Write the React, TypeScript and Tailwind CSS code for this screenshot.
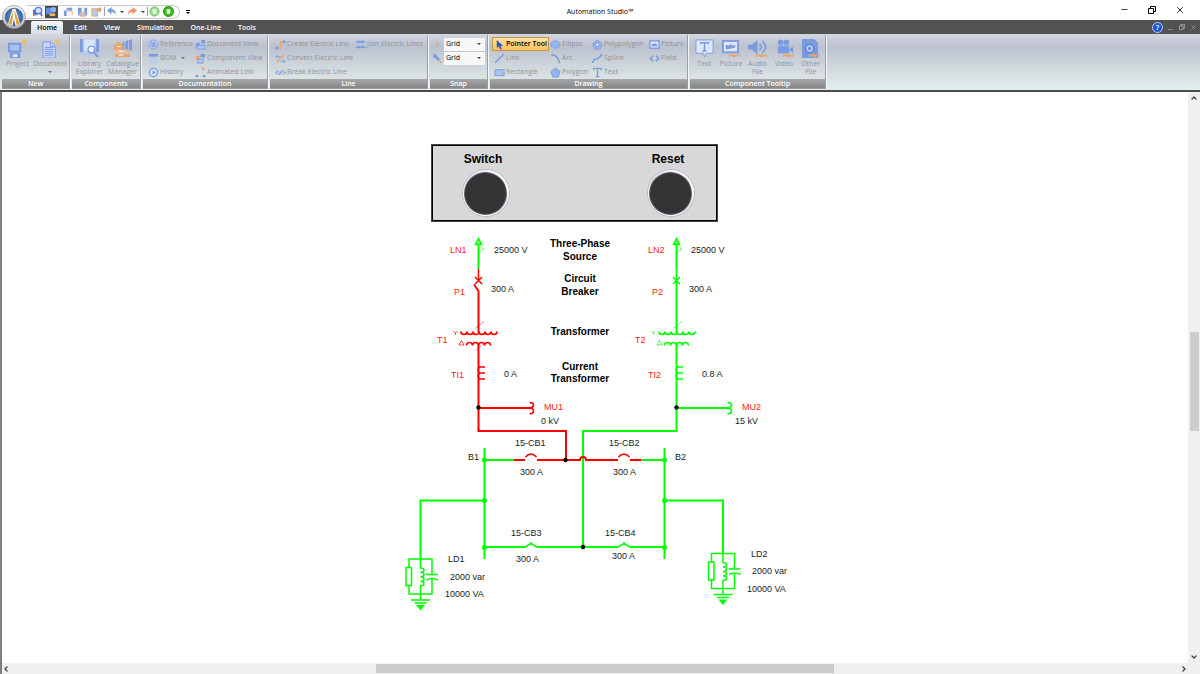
import type { ReactNode } from 'react';
import { ChevronDown, ChevronLeft, ChevronRight, ChevronUp, Minus, X } from 'lucide-react';

const BLUE = '#7b9be0';
const PALE = '#b4c8f2';
const ORANGE = '#eba26c';
const RED = '#ff0000';
const GREEN = '#00ff00';

const small: Record<string, ReactNode> = {
  reference: <><circle cx="6" cy="6" r="5" fill="#c3d2f3" stroke={BLUE} /><path d="M3 3l6 6M6 3l3 3M3 6l3 3" stroke={BLUE} strokeWidth="1.5" /></>,
  bom: <><path d="M1 1h10v3H1z" fill={BLUE} /><path d="M1 6h10M1 8.5h10M1 11h10M4 4v7M8 4v7" stroke={PALE} /></>,
  history: <><circle cx="6" cy="6" r="4.5" fill="#dbe5fa" stroke={BLUE} strokeWidth="1.5" /><path d="M5 3.5L8.5 6 5 8.5z" fill={BLUE} /></>,
  docView: <><path d="M1 4h4v6H1zM7 1h4v4H7z" fill={BLUE} /><path d="M2 7h9v4H2z" fill={PALE} stroke={BLUE} /></>,
  compView: <><path d="M6 1h5v4H6z" fill={BLUE} /><path d="M1 3h4v4H1z" fill={ORANGE} /><path d="M3 7h6v4H3z" fill={PALE} stroke={BLUE} /></>,
  animated: <><path d="M2 10h8M9 2v6" stroke={PALE} strokeDasharray="1 1" /><circle cx="2" cy="10" r="1.5" fill={BLUE} /><circle cx="9" cy="2" r="1.5" fill={ORANGE} /><circle cx="10" cy="10" r="1.5" fill={BLUE} /></>,
  createLine: <><path d="M2 10h4V3h4" fill="none" stroke={ORANGE} strokeWidth="1.5" /><circle cx="2" cy="10" r="1.7" fill={BLUE} /><circle cx="10" cy="3" r="1.7" fill={BLUE} /></>,
  convertLine: <><path d="M2 10L10 2" stroke={ORANGE} strokeWidth="1.5" /><path d="M1 4h5M3 2l-2 2 2 2M6 9h5M9 7l2 2-2 2" fill="none" stroke={BLUE} /></>,
  breakLine: <><path d="M0 6h1M11 6h1M5 9l2-6" stroke={BLUE} /><circle cx="2.7" cy="6" r="1.7" fill="none" stroke={BLUE} /><circle cx="9.3" cy="6" r="1.7" fill="none" stroke={BLUE} /></>,
  joinLines: <><path d="M1 3h10M1 9h10" stroke={BLUE} strokeWidth="1.5" /><path d="M4 1v4M8 1v4M4 7v4M8 7v4" stroke={BLUE} /></>,
  snapGrid: <><path d="M6 3v6M3 6h6" stroke={ORANGE} /><path d="M2 2v8M10 2v8" stroke={PALE} strokeDasharray="1 2" /></>,
  snapPoint: <><path d="M1 1l5 1-1 1 4 4-2 2-4-4-1 1z" fill={BLUE} /><circle cx="9.5" cy="10" r="1.2" fill={ORANGE} /></>,
  pointer: <path d="M3 1v9l2-2 2 3.5 1.5-1L7 7.5h3z" fill="#2456c8" />,
  line: <path d="M1 11L11 1" stroke={BLUE} strokeWidth="1.5" />,
  rectangle: <rect x="1" y="3" width="10" height="6.5" fill="#a9c2f4" stroke={BLUE} />,
  ellipse: <ellipse cx="6" cy="6" rx="5" ry="4" fill="#98b4ee" stroke={BLUE} />,
  arc: <path d="M1 2c5-.5 8 2.5 9.5 9" fill="none" stroke={BLUE} strokeWidth="1.7" />,
  polygon: <path d="M6 1l5 4-2 6H3L1 5z" fill="#98b4ee" stroke={BLUE} />,
  polypolygon: <><path d="M6 1l5 4-2 6H3L1 5z" fill="#98b4ee" stroke={BLUE} /><path d="M6 4l2 2-1 2.5H5L4 6z" fill="#e1eafb" stroke={BLUE} /></>,
  spline: <path d="M1 11C1 6 4 7 6 6s3-1 5-5" fill="none" stroke={BLUE} strokeWidth="1.7" />,
  text: <path d="M2 3.5V1.5h8v2M6 1.5v9M4 10.5h4" fill="none" stroke={BLUE} strokeWidth="1.5" />,
  picture: <><rect x="1" y="2" width="10" height="8" fill="#dfe8fb" stroke={BLUE} strokeWidth="1.5" /><path d="M3 8V5l2 1 1-2 2 2 1-1v3z" fill={BLUE} /></>,
  field: <path d="M4.5 3L1.5 6l3 3M7.5 3l3 3-3 3" fill="none" stroke={BLUE} strokeWidth="1.7" />,
};

const tooltipMark = <path d="M9 17.5h2l1-1 1 2 1-2 1 2 1-1h2M9 16v3M19 16v3" fill="none" stroke={ORANGE} strokeWidth="1.4" />;

const large: Record<string, ReactNode> = {
  project: <><path d="M1 5h12v8H1z" fill="#a8c0f0" stroke={BLUE} strokeWidth="2" /><path d="M2 14h11v6H2z" fill={BLUE} /><path d="M5 16h5v3H5z" fill="#dfe7f8" /><circle cx="17" cy="3" r="2.5" fill="#ecc868" /><path d="M14 3h6M17 0v6" stroke="#e2bd62" /></>,
  document: <><path d="M2 3h8l5 5v12H2z" fill="#c6d6f7" stroke={BLUE} /><path d="M4 9h9M4 11h9M4 13h9M4 15h9M4 17h9M10 3v5h5" fill="none" stroke={BLUE} /><circle cx="17" cy="3" r="2.5" fill="#ecc868" /><path d="M14 3h6M17 0v6" stroke="#e2bd62" /></>,
  library: <><path d="M0 0h3v14H0zM17 0h3v14h-3z" fill={BLUE} /><path d="M4 0h12v13H4z" fill="#dbe5fa" stroke={PALE} /><path d="M0 15h20v2H0z" fill={PALE} /><circle cx="12" cy="11" r="3.5" fill="#eef3fd" stroke={BLUE} strokeWidth="1.5" /><path d="M14.5 13.5L19 19" stroke={BLUE} strokeWidth="2" /></>,
  catalogue: <><path d="M10 4l2-2v9h-2zM13 3l3-2v10h-3zM17 1l3-1v12h-3z" fill={BLUE} /><path d="M1 7l5-4 5 4v4H1z" fill={ORANGE} /><path d="M1 12h17v3H1z" fill="#f0b98d" /><path d="M2 16h16v3H2z" fill={ORANGE} /><path d="M6 13h5M6 17h5M4 8h4" stroke="#fff" /></>,
  text: <><path d="M1 1h18v14h-7l-2 4-1-4H1z" fill="#dfe8fb" stroke={BLUE} /><path d="M6 5.5V4h8v1.5M10 4v8M8 12.5h4" fill="none" stroke={BLUE} strokeWidth="1.7" /></>,
  picture: <><rect x="2" y="2" width="16" height="12" fill="#dfe8fb" stroke={BLUE} strokeWidth="2" /><path d="M5 11V6l3 1 2-2 2 2 3-1v3l-4 1z" fill={BLUE} />{tooltipMark}</>,
  audio: <><path d="M0 6h4l6-5v15l-6-5H0z" fill={BLUE} /><path d="M12 5q4 3.5 0 7M15 2q7 6.5 0 13" fill="none" stroke={BLUE} strokeWidth="1.8" />{tooltipMark}</>,
  video: <><circle cx="6" cy="3.5" r="3" fill={BLUE} /><circle cx="12" cy="3.5" r="3" fill={BLUE} /><path d="M3 7h12v8H3zM15 11l4-3v7z" fill={BLUE} />{tooltipMark}</>,
  file: <><path d="M1 0h13l4 4v16H1z" fill={BLUE} /><circle cx="9" cy="10" r="4.5" fill={PALE} stroke="#5b82d6" strokeWidth="1.5" /><circle cx="9" cy="10" r="1.5" fill="#5b82d6" />{tooltipMark}</>,
};

function SmallIcon({ name }: { name: string }) {
  return <svg viewBox="0 0 12 12" className="w-[11px] h-[11px] shrink-0" aria-hidden="true">{small[name]}</svg>;
}

function Tool({ icon, label, menu, active }: { icon: string; label: string; menu?: boolean; active?: boolean }) {
  return (
    <button type="button" className={`flex items-center justify-self-start h-[12px] px-px gap-px whitespace-nowrap text-[7px] leading-[8px] ${active ? 'bg-linear-to-b from-[#ffe3a6] to-[#ffc258] outline outline-[#c69447] text-black font-semibold' : 'text-[#8f939b]'}`}>
      <SmallIcon name={icon} />
      <span>{label}</span>
      {menu && <span className="ml-1 border-x-2 border-x-transparent border-t-2 border-t-gray-500" />}
    </button>
  );
}

function BigTool({ icon, label, menu }: { icon: string; label: string; menu?: boolean }) {
  return (
    <button type="button" className="flex flex-col items-center pt-0.5 text-[7px] leading-[8px] text-[#8f939b]">
      <svg viewBox="0 0 20 20" className="w-[19px] h-[19px] mb-0.5 shrink-0" aria-hidden="true">{large[icon]}</svg>
      <span className="whitespace-pre-line">{label}</span>
      {menu && <span className="mt-[3px] border-x-2 border-x-transparent border-t-2 border-t-gray-500" />}
    </button>
  );
}

function Group({ title, width, children }: { title: string; width: string; children: ReactNode }) {
  return (
    <section className={`${width} shrink-0 flex flex-col border-r border-b border-[#9a9da1] shadow-[1px_0_0_#f4f6f8] mr-0.5`}>
      <div className="flex-1 pt-0.5 px-px">{children}</div>
      <h2 className="h-[9px] bg-linear-to-b from-[#a6a7a8] to-[#868788] text-white text-[7px] leading-[9px] font-semibold text-center">{title}</h2>
    </section>
  );
}

function SnapRow({ icon, label }: { icon: string; label: string }) {
  return (
    <div className="flex items-center gap-px h-[14px] pl-px">
      <SmallIcon name={icon} />
      <div className="relative flex items-center">
        <select aria-label={label} className="appearance-none w-[41px] h-[13px] pl-0.5 bg-[#f7f7f7] text-[7px] leading-[12px] font-medium text-black">
          <option>Grid</option>
        </select>
        <span className="absolute right-1 border-x-2 border-x-transparent border-t-2 border-t-gray-700 pointer-events-none" />
      </div>
    </div>
  );
}

function Logo() {
  return (
    <button type="button" aria-label="Application menu" className="absolute left-[2px] top-[5px] z-10">
      <svg viewBox="0 0 48 48" className="w-[24px] h-[24px]">
        <defs>
          <linearGradient id="rim" x1="0" y1="0" x2="0" y2="1"><stop offset="0" stopColor="#ffffff" /><stop offset="1" stopColor="#b4b6ba" /></linearGradient>
          <radialGradient id="disc"><stop offset="0" stopColor="#79b2e6" /><stop offset="1" stopColor="#255f9f" /></radialGradient>
        </defs>
        <circle cx="24" cy="24" r="23" fill="url(#rim)" stroke="#8a8c90" strokeWidth="1.5" />
        <circle cx="24" cy="24" r="18" fill="url(#disc)" stroke="#6d7f96" strokeWidth="1.5" />
        <path d="M21 8h6l9 30-6 3h-3l-3-14-3 14h-3l-6-3z" fill="#fff" />
        <path d="M23 9l-1 15-3 16-6-2zM25 9l1 15 3 16 6-2z" fill="#f0a028" />
      </svg>
    </button>
  );
}

function QuickButton({ label, dark, children }: { label: string; dark?: boolean; children: ReactNode }) {
  return (
    <button type="button" aria-label={label} className={`w-[13px] h-[12px] flex items-center justify-center ${dark ? 'bg-[#4a4a4a]' : ''}`}>
      <svg viewBox="0 0 12 12" className="w-[11px] h-[11px]">{children}</svg>
    </button>
  );
}

function MenuArrow() {
  return <span className="mx-0.5 border-x-2 border-x-transparent border-t-2 border-t-gray-700" />;
}

function QuickAccess() {
  return (
    <div className="flex items-center">
      <div className="flex items-center h-[14px] ml-[27px] pl-1 pr-1 border border-l-0 border-[#c9c9c9] rounded-r-full bg-[#fbfbfb]">
        <QuickButton label="Find component"><path d="M1 4h5v6H1z" fill="#5076cc" /><circle cx="7" cy="5" r="3.5" fill="#d7e3fb" stroke="#5480dc" strokeWidth="1.5" /><path d="M9 7l2 4" stroke="#5480dc" strokeWidth="2" /><path d="M1 10h3" stroke="#e99a49" strokeWidth="2" /></QuickButton>
        <div className="w-px" />
        <QuickButton label="Component preview" dark><path d="M0 2h6v7H0z" fill="#5b8cf0" /><circle cx="8" cy="4" r="3" fill="#8eb4ff" /><path d="M4 8h6v3H4z" fill="#f0b46d" /></QuickButton>
        <div className="w-1" />
        <QuickButton label="New window"><path d="M1 2h9v3H1zM1 2v9h3V2z" fill={BLUE} /><path d="M5 5.5h5v4" fill="none" stroke={ORANGE} /></QuickButton>
        <div className="w-px" />
        <QuickButton label="Save"><path d="M1 2h4v8H1zM8 2h3v8H8z" fill={BLUE} /><path d="M3 7h6v4H3z" fill={PALE} stroke={ORANGE} /></QuickButton>
        <div className="w-px" />
        <QuickButton label="Close project"><path d="M1 3h6v8H1z" fill={PALE} stroke={ORANGE} /><circle cx="9" cy="4" r="2.5" fill={ORANGE} /></QuickButton>
        <div className="w-px h-[9px] ml-px bg-gray-400" />
        <QuickButton label="Undo"><path d="M6 1L1 5l5 4V6.5c3 0 4 1 5 3C11 6 9 3.5 6 3.5z" fill={BLUE} /></QuickButton>
        <MenuArrow />
        <QuickButton label="Redo"><path d="M6 1l5 4-5 4V6.5c-3 0-4 1-5 3C1 6 3 3.5 6 3.5z" fill="#f0946a" /></QuickButton>
        <MenuArrow />
        <div className="w-px h-[9px] bg-gray-400" />
        <QuickButton label="Simulate selection"><circle cx="6" cy="6" r="5" fill="#9bdc8e" stroke="#6cbc60" /><path d="M4 3.5h4v5H4z" fill="#e5f8e1" /></QuickButton>
        <div className="w-px" />
        <QuickButton label="Simulate"><circle cx="6" cy="6" r="5.5" fill="#35b819" stroke="#258c10" /><path d="M4 3.5h4v5H4z" fill="#e7ffe0" /></QuickButton>
      </div>
      <button type="button" aria-label="Customize toolbar" className="ml-[6px] flex flex-col items-center gap-px">
        <span className="w-1 h-px bg-black" />
        <span className="border-x-2 border-x-transparent border-t-2 border-t-black" />
      </button>
    </div>
  );
}

function Restore({ className }: { className: string }) {
  return <svg viewBox="0 0 8 8" className={className} fill="none" stroke="currentColor"><path d="M.5 2.5h5v5h-5zM2.5 2.5v-2h5v5h-2" /></svg>;
}

function TitleBar() {
  return (
    <header className="grid grid-cols-[1fr_auto_1fr] items-center h-[20px] pt-[3px] bg-white shrink-0">
      <QuickAccess />
      <h1 className="text-[7px] leading-[10px] font-medium text-black">Automation Studio™</h1>
      <div className="flex items-center justify-end gap-[19px] pr-[15px] h-full -mt-1 text-black">
        <button type="button" aria-label="Minimize"><Minus className="w-[9px] h-[9px]" /></button>
        <button type="button" aria-label="Restore"><Restore className="w-[8px] h-[8px]" /></button>
        <button type="button" aria-label="Close"><X className="w-[10px] h-[10px]" /></button>
      </div>
    </header>
  );
}

function Tabs() {
  const tabs = ['Edit', 'View', 'Simulation', 'One-Line', 'Tools'];
  return (
    <nav className="flex items-stretch h-[14px] pl-[31px] pr-[3px] bg-[#525252] shrink-0 text-[7px] leading-[15px] font-semibold text-white">
      <button type="button" className="w-[32px] mt-px leading-[14px] text-center bg-linear-to-b from-[#f6f7f9] to-[#d7dbe3] rounded-t-xs text-black">Home</button>
      <div className="flex gap-[17px] pl-[11px]">
        {tabs.map((t) => <button key={t} type="button">{t}</button>)}
      </div>
      <div className="ml-auto flex items-center gap-[5px] text-[#a9b4c4]">
        <button type="button" aria-label="Help" className="w-[9px] h-[9px] rounded-full bg-[#1b57e0] outline outline-[#b9cdfb] text-white text-[7px] leading-[9px]">?</button>
        <button type="button" aria-label="Minimize document" className="pt-1"><Minus className="w-[7px] h-[7px]" /></button>
        <button type="button" aria-label="Restore document"><Restore className="w-[6px] h-[6px]" /></button>
        <button type="button" aria-label="Close document"><X className="w-[7px] h-[7px]" /></button>
      </div>
    </nav>
  );
}

const rows = 'grid auto-rows-[14px] items-center';

function Ribbon() {
  return (
    <div className="flex h-[56px] pl-[2px] pt-px pb-px shrink-0 bg-linear-to-b from-[#d3d7e0] via-[#bcc2ce] to-[#e6efed] from-0% via-22% to-100% overflow-hidden">
      <Group title="New" width="w-[68px]">
        <div className="grid grid-cols-[29px_1fr]">
          <BigTool icon="project" label="Project" />
          <BigTool icon="document" label="Document" menu />
        </div>
      </Group>
      <Group title="Components" width="w-[69px]">
        <div className="grid grid-cols-2">
          <BigTool icon="library" label={'Library\nExplorer'} />
          <BigTool icon="catalogue" label={'Catalogue\nManager'} />
        </div>
      </Group>
      <Group title="Documentation" width="w-[125px]">
        <div className={`${rows} grid-cols-[47px_1fr] pl-[3px]`}>
          <Tool icon="reference" label="Reference" />
          <Tool icon="docView" label="Document View" />
          <Tool icon="bom" label="BOM" menu />
          <Tool icon="compView" label="Component View" />
          <Tool icon="history" label="History" />
          <Tool icon="animated" label="Animated Link" />
        </div>
      </Group>
      <Group title="Line" width="w-[158px]">
        <div className={`${rows} grid-cols-[80px_1fr] pl-[3px]`}>
          <Tool icon="createLine" label="Create Electric Line" />
          <Tool icon="joinLines" label="Join Electric Lines" />
          <div className="col-span-2"><Tool icon="convertLine" label="Convert Electric Line" /></div>
          <div className="col-span-2"><Tool icon="breakLine" label="Break Electric Line" /></div>
        </div>
      </Group>
      <Group title="Snap" width="w-[58px]">
        <div className={rows}>
          <SnapRow icon="snapGrid" label="Snap to grid" />
          <SnapRow icon="snapPoint" label="Snap to point" />
        </div>
      </Group>
      <Group title="Drawing" width="w-[198px]">
        <div className={`${rows} grid-cols-[56px_42px_57px_1fr] pl-0.5`}>
          <Tool icon="pointer" label="Pointer Tool" active />
          <Tool icon="ellipse" label="Ellipse" />
          <Tool icon="polypolygon" label="Polypolygon" />
          <Tool icon="picture" label="Picture" />
          <Tool icon="line" label="Line" />
          <Tool icon="arc" label="Arc" />
          <Tool icon="spline" label="Spline" />
          <Tool icon="field" label="Field" />
          <Tool icon="rectangle" label="Rectangle" />
          <Tool icon="polygon" label="Polygon" />
          <Tool icon="text" label="Text" />
        </div>
      </Group>
      <Group title="Component Tooltip" width="w-[136px]">
        <div className="grid grid-cols-5">
          <BigTool icon="text" label="Text" />
          <BigTool icon="picture" label="Picture" />
          <BigTool icon="audio" label={'Audio\nFile'} />
          <BigTool icon="video" label="Video" />
          <BigTool icon="file" label={'Other\nFile'} />
        </div>
      </Group>
    </div>
  );
}

function PushButton({ label }: { label: string }) {
  return (
    <button type="button" className="flex flex-col items-center text-[12px] leading-[18px] font-bold text-black">
      <span className="pr-[6px]">{label}</span>
      <svg viewBox="0 0 50 50" className="w-[50px] h-[50px]" aria-hidden="true">
        <defs>
          <linearGradient id="ring" x1="0" y1="0" x2="1" y2="1">
            <stop offset="0" stopColor="#a5a5b8" /><stop offset=".3" stopColor="#f6f6ff" /><stop offset=".7" stopColor="#ffffff" /><stop offset="1" stopColor="#a0a0b4" />
          </linearGradient>
          <radialGradient id="cap"><stop offset=".92" stopColor="#333" /><stop offset="1" stopColor="#6a6a70" /></radialGradient>
        </defs>
        <circle cx="25" cy="25" r="23.5" fill="url(#ring)" stroke="#b9b9cc" />
        <circle cx="25" cy="25" r="22.5" fill="none" stroke="#f4f4fc" />
        <circle cx="24.5" cy="25.5" r="21.5" fill="url(#cap)" />
      </svg>
    </button>
  );
}

// One incoming feeder: source, breaker, transformer, current and voltage sensing.
function Feeder({ x, live }: { x: number; live: boolean }) {
  const c = live ? GREEN : RED;
  return (
    <g transform={`translate(${x} 0)`} fill="none" stroke={c} strokeWidth="2">
      <g stroke={GREEN}>
        <path d="M0 240v29" />
        <path d="M0 238.5l-3 6h6z" fill="#8dff8d" strokeWidth="1.5" />
        <path d="M0 254l5-6-1 3M1 247h3" strokeWidth="1" opacity=".5" />
      </g>
      <path d="M0 269v11M-3.5 277l7 7M3.5 277l-7 7" strokeWidth="1.5" />
      {live ? <path d="M0 280v52" /> : <path d="M-4.5 284.5L0 291v41" strokeWidth="2" />}
      <path d="M-3 328l7-5 1-2M-2 350l7-6" strokeWidth="1" opacity=".5" />
      <path d="M-17.5 331.5a3 3 0 0 0 6 0a3 3 0 0 0 6 0a3 3 0 0 0 6 0a3 3 0 0 0 6 0a3 3 0 0 0 6 0a3 3 0 0 0 6 0" strokeWidth="1.7" />
      <path d="M-12 345.5a3 3 0 0 1 6 0a3 3 0 0 1 6 0a3 3 0 0 1 6 0a3 3 0 0 1 6 0" strokeWidth="1.7" />
      <path d="M-25 331l2 2 2-2M-23 333v2M-19.5 345l2.5-4.5 2.5 4.5z" strokeWidth="1" opacity=".7" />
      <path d="M0 343v87" />
      <path d="M6.5 367H1q-3 3 0 6h5.5M1 373q-3 3 0 6h5.5" strokeWidth="1.5" />
      <path d="M0 408h53" strokeWidth="2" />
      <path d="M51 402.5q4 0 4 2.5t-4 3q4 0 4 3t-4 2.5" strokeWidth="1.7" />
      <circle cx="0" cy="407.5" r="2.2" fill="#000" stroke="none" />
    </g>
  );
}

function Load({ x, y }: { x: number; y: number }) {
  return (
    <g transform={`translate(${x} ${y})`} fill="none" stroke={GREEN} strokeWidth="1.5">
      <path d="M-11.5 8V0H11.5v15M-11.5 26v9H11.5V20" />
      <path d="M-14.5 8.500h5.5v18h-5.5z" />
      <path d="M0 0v9q3.5 0 3.5 2.2T0 13.5q3.5 0 3.5 2.2T0 18q3.5 0 3.5 2.2T0 22.5q3.5 0 3.5 2.2T0 27v14" />
      <path d="M5.5 15.500h12M6 21q5.5-3 11.5 0M-9.5 41h19M-6 44h12" />
      <path d="M-4.5 46h9L0 51.5z" fill={GREEN} stroke="none" />
    </g>
  );
}

type Label = [x: number, y: number, text: string];

const tags: Label[] = [
  [450, 253, 'LN1'], [454, 295, 'P1'], [437, 343, 'T1'], [451, 378, 'TI1'], [544, 410, 'MU1'],
  [648, 253, 'LN2'], [652, 295, 'P2'], [635, 343, 'T2'], [648, 378, 'TI2'], [742, 410, 'MU2'],
];

const values: Label[] = [
  [494, 253, '25000 V'], [491, 292, '300 A'], [504, 377, '0 A'], [541, 424, '0 kV'],
  [691, 253, '25000 V'], [689, 292, '300 A'], [702, 377, '0.8 A'], [735, 424, '15 kV'],
  [515, 446, '15-CB1'], [609, 446, '15-CB2'], [468, 460, 'B1'], [675, 460, 'B2'],
  [520, 475, '300 A'], [613, 475, '300 A'], [511, 536, '15-CB3'], [605, 536, '15-CB4'],
  [516, 562, '300 A'], [612, 559, '300 A'],
  [448, 562, 'LD1'], [450, 580, '2000 var'], [445, 597, '10000 VA'],
  [751, 557, 'LD2'], [752, 574, '2000 var'], [747, 592, '10000 VA'],
];

const captions: Label[] = [
  [580, 247, 'Three-Phase'], [580, 260, 'Source'], [580, 282, 'Circuit'], [580, 295, 'Breaker'],
  [580, 335, 'Transformer'], [580, 370, 'Current'], [580, 382, 'Transformer'],
];

function Schematic() {
  return (
    <svg viewBox="400 221 390 394" className="w-[390px] h-[394px]" role="img" aria-label="One-line diagram">
      <g fill="none" strokeWidth="2">
        <g stroke={GREEN}>
          <path d="M676.5 430v1H583v116" />
          <path d="M484.5 448v111M664.5 448v111" />
          <path d="M484 460h30M641 460h23M484 547h41M537 547h81M630 547h34" />
          <path d="M525 547l5-3h2l5 3M618 547l5-3h2l5 3M531 542v2M624 542v2" strokeWidth="1.5" />
          <path d="M484 500.5h-63.5V559M664 500.5h59V553" />
        </g>
        <g stroke={RED}>
          <path d="M478.5 429v2H566v29" />
          <path d="M514 460h11M537 460h43q0-3 3-3t3 3h32M630 460h11" strokeWidth="2" />
          <path d="M525.5 457q5.5-6 11 0M618.5 457q5.5-6 11 0" strokeWidth="1.7" />
        </g>
      </g>
      <Feeder x={478.5} live={false} />
      <Feeder x={676.5} live />
      <Load x={420.5} y={559} />
      <Load x={723} y={553.5} />
      {[484.5, 664.5].map((x) => [460, 500.5, 547.5].map((y) => <circle key={`${x}-${y}`} cx={x} cy={y} r="2.5" fill={GREEN} />))}
      <circle cx="565.5" cy="460" r="2.2" />
      <circle cx="583" cy="547" r="2.2" />
      <g fontSize="9" fill="#ff2020">{tags.map(([x, y, t]) => <text key={t} x={x} y={y}>{t}</text>)}</g>
      <g fontSize="9" fill="#222">{values.map(([x, y, t]) => <text key={`${x}-${y}`} x={x} y={y}>{t}</text>)}</g>
      <g fontSize="10" fontWeight="700" textAnchor="middle">{captions.map(([x, y, t]) => <text key={y} x={x} y={y}>{t}</text>)}</g>
    </svg>
  );
}

export default function App() {
  return (
    <div className="relative flex flex-col h-screen bg-white font-['Open_Sans','Noto_Sans',sans-serif]">
      <Logo />
      <TitleBar />
      <Tabs />
      <Ribbon />
      <div className="h-[2px] shrink-0 bg-[#4b4b4b]" />
      <div className="flex flex-1 min-h-0 border-l-2 border-[#808080]">
        <main className="flex-1 min-w-0 overflow-hidden pt-[53px] font-['Liberation_Sans',Arial,sans-serif]">
          <div className="w-[390px] mx-auto">
            <div className="flex justify-between ml-8 w-[285px] h-[76px] pt-1 pl-[28px] pr-[20px] border border-black outline outline-[#444] bg-[#d8d8d8]">
              <PushButton label="Switch" />
              <PushButton label="Reset" />
            </div>
            <Schematic />
          </div>
        </main>
        <div className="w-[12px] shrink-0 flex flex-col items-center bg-[#f0f0f0] py-0.5 text-[#444]">
          <ChevronUp className="w-[8px] h-[8px] shrink-0" strokeWidth={4} />
          <div className="grow-[230]" />
          <div className="w-[9px] grow-[98] bg-[#cdcdcd]" />
          <div className="grow-[222]" />
          <ChevronDown className="w-[8px] h-[8px] shrink-0" strokeWidth={4} />
        </div>
      </div>
      <div className="h-[11px] shrink-0 flex items-center border-l-2 border-[#808080] bg-[#f0f0f0] pr-[12px] text-[#444]">
        <ChevronLeft className="w-[8px] h-[8px] shrink-0" strokeWidth={4} />
        <div className="grow-[366]" />
        <div className="h-[9px] grow-[458] bg-[#cdcdcd]" />
        <div className="grow-[346]" />
        <ChevronRight className="w-[8px] h-[8px] shrink-0" strokeWidth={4} />
      </div>
    </div>
  );
}
